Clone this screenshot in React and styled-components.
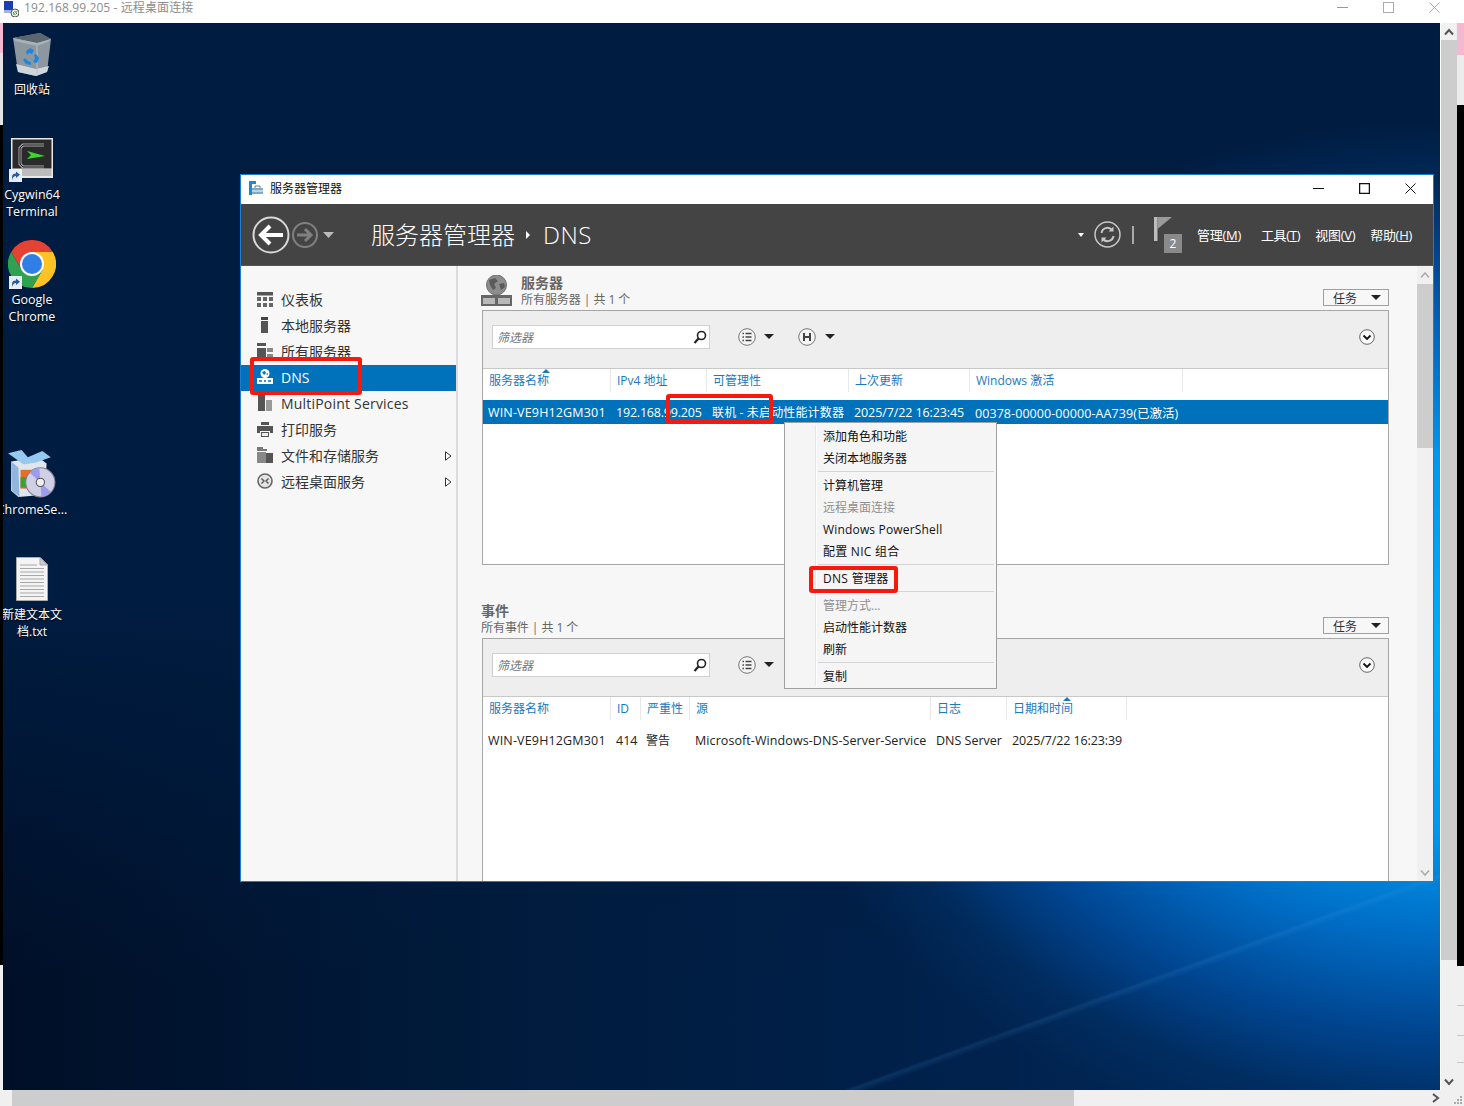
import React from 'react';
import styled, { createGlobalStyle } from 'styled-components';

const FONT = `"Open Sans","Noto Sans CJK SC",sans-serif`;

const Global = createGlobalStyle`
  html, body { margin: 0; padding: 0; background: #fff; }
  body { font-family: ${FONT}; }
  #root { width: 1464px; height: 1106px; overflow: hidden; }
  * { box-sizing: border-box; }
`;

const Page = styled.div`
  width: 1464px; height: 1106px; display: flex; flex-direction: column; background: #fff; overflow: hidden;
`;
const RdpTitle = styled.div`
  height: 23px; flex: none; display: flex; align-items: center; background: #fff; padding-left: 3px;
`;
const RdpText = styled.span`
  margin-left: 5px; font-size: 12px; color: #8c8c8c; flex: 1; white-space: nowrap; letter-spacing: .1px; margin-top: -9px;
`;
const RdpControls = styled.div`
  display: flex; align-items: center; gap: 35px; margin-top: -8px; margin-right: 24px;
`;
const MiddleRow = styled.div`
  height: 1067px; flex: none; display: flex;
`;
const EdgeStrip = styled.div`
  width: ${p => p.$w}px; flex: none; display: flex; flex-direction: column;
`;
const EdgePart = styled.div`
  height: ${p => p.$h}px; flex: none; background: ${p => p.$c}; border-bottom: ${p => p.$line ? '1px solid #c8c8c8' : 'none'};
`;
const Desktop = styled.div`
  width: 1437px; flex: none; position: relative; overflow: hidden;
  background:
    linear-gradient(160deg, transparent 86.3%, rgba(70,160,235,.14) 86.5%, transparent 86.9%),
    radial-gradient(ellipse 690px 525px at 1452px 620px, #00acf8 0%, #0096ec 36%, #006cc4 56%, #004590 74%, rgba(0,50,105,.6) 88%, transparent 100%),
    linear-gradient(180deg, #001c40 0%, #001c40 55%, rgba(0,28,64,0) 90%),
    linear-gradient(90deg, #000f27 0%, #001a3a 30%, #002049 60%, #012a5c 100%);
`;
const VScroll = styled.div`
  width: 17px; flex: none; background: #f0f0f0; border-left: 1px solid #fff; display: flex; flex-direction: column; align-items: stretch;
`;
const ScrollEnd = styled.div`
  height: ${p => p.$h}px; flex: none; display: flex; align-items: center; justify-content: center;
`;
const VThumb = styled.div`
  height: ${p => p.$h}px; flex: none; background: #cdcdcd;
`;
const Spring = styled.div`flex: 1;`;
const HScroll = styled.div`
  height: 16px; flex: none; display: flex; background: #f0f0f0; align-items: stretch;
`;
const HThumb = styled.div`
  width: 1062px; margin-left: 12px; background: #cdcdcd;
`;
const HArrow = styled.div`
  margin-left: auto; width: 32px; display: flex; align-items: center; justify-content: flex-start; position: relative;
`;
const Grip = styled.svg`
  position: absolute; right: 1px; bottom: 1px;
`;

/* Desktop icons */
const DeskIcon = styled.div`
  position: absolute; left: -10px; top: ${p => p.$top}px; width: 78px;
  display: flex; flex-direction: column; align-items: center;
`;
const DeskImage = styled.div`
  width: 48px; height: ${p => p.$h}px; position: relative; display: flex; justify-content: center;
`;
const DeskLabel = styled.div`
  font-size: ${p => p.$cjk ? 12 : 12.5}px; line-height: 17px; color: #fff; text-align: center; white-space: nowrap;
  margin-top: ${p => p.$gap}px; text-shadow: 0 1px 2px rgba(0,0,0,.8);
`;
const Shortcut = styled.svg`
  position: absolute; left: 1px; bottom: ${p => p.$b}px;
`;

/* Server manager window */
const Window = styled.div`
  position: absolute; left: 237px; top: 151px; width: 1194px; height: 708px;
  background: #fff; border: 1px solid #1a7fd4; display: flex; flex-direction: column; overflow: hidden;
`;
const WinTitle = styled.div`
  height: 29px; flex: none; display: flex; align-items: center; padding: 0 0 3px 8px; background: #fff;
`;
const WinTitleText = styled.span`
  font-size: 12px; color: #111; margin-left: 6px; flex: 1;
`;
const WinButtons = styled.div`
  display: flex; align-items: center; gap: 35px; margin-right: 17px;
`;
const Header = styled.div`
  height: 62px; flex: none; background: #444; display: flex; align-items: center; padding-left: 11px; border-bottom: 1px solid #555;
`;
const NavButtons = styled.div`
  display: flex; align-items: center; width: 119px; flex: none;
  & > svg:nth-child(2) { margin-left: 2px; }
`;
const Crumb = styled.span`
  font-size: 24px; font-weight: 300; color: #fff; white-space: nowrap; line-height: 30px; letter-spacing: ${p => p.$ls || 0}px;
`;
const CrumbArrow = styled.span`
  width: 0; height: 0; border-left: 4px solid #fff; border-top: 4px solid transparent; border-bottom: 4px solid transparent;
  margin: 0 13px 0 11px;
`;
const HeaderRight = styled.div`
  margin-left: auto; display: flex; align-items: center;
`;
const SmallDrop = styled.span`
  width: 0; height: 0; border-top: 4px solid #fff; border-left: 3.5px solid transparent; border-right: 3.5px solid transparent;
  margin-right: 10px;
`;
const HeaderDivider = styled.span`
  width: 2px; height: 18px; background: #aaa; margin: 0 20px 0 11px;
`;
const FlagWrap = styled.div`
  position: relative; width: 28px; height: 36px; margin-right: 15px;
`;
const Badge = styled.span`
  position: absolute; right: 0; bottom: 0; width: 18px; height: 19px; background: #8a8a8a; color: #fff;
  font-size: 12px; display: flex; align-items: center; justify-content: center;
`;
const Menu = styled.span`
  font-size: 13px; color: #fff; margin-right: ${p => p.$mr}px; white-space: nowrap; letter-spacing: -.3px;
`;
const Body = styled.div`
  flex: 1; display: flex; min-height: 0; background: #f7f7f7;
`;
const Sidebar = styled.nav`
  width: 217px; flex: none; padding-top: 21px; border-right: 2px solid #dcdcdc; display: flex; flex-direction: column;
`;
const NavItem = styled.div`
  height: 26px; flex: none; display: flex; align-items: center; padding: 0 0 2px 15px; position: relative;
  background: ${p => p.$active ? '#0072bc' : 'transparent'}; color: ${p => p.$active ? '#fff' : '#333'};
  font-size: 14px; white-space: nowrap; letter-spacing: ${p => p.$ls || 0}px;
`;
const NavIconBox = styled.span`
  width: 18px; height: 18px; flex: none; margin-right: 7px; display: flex; align-items: center; justify-content: center;
`;
const NavCaret = styled.svg`
  position: absolute; right: 4px; top: 8px;
`;
const Content = styled.main`
  width: 959px; flex: none; padding: 9px 28px 0 23px; overflow: hidden;
`;
const SectionHead = styled.div`
  height: 35px; display: flex; align-items: stretch;
`;
const HeadIcon = styled.div`
  width: 31px; margin-right: 9px; flex: none;
`;
const HeadText = styled.div`
  flex: 1; display: flex; flex-direction: column; justify-content: ${p => p.$end ? 'flex-end' : 'flex-start'};
`;
const SecTitle = styled.div`
  font-size: 14px; font-weight: 700; color: #666; line-height: 16px;
`;
const SecSub = styled.div`
  font-size: 12px; color: #666; line-height: 16px; padding-bottom: 2px; margin-top: ${p => p.$mt || 0}px; letter-spacing: -.05px;
`;
const TaskButton = styled.div`
  width: 66px; height: 17px; align-self: flex-end; margin-bottom: 4px; border: 1px solid #a0a0a0; background: #f7f7f7;
  font-size: 12px; color: #333; display: flex; align-items: center; padding-left: 9px; justify-content: space-between; padding-right: 7px;
`;
const DarkDrop = styled.span`
  width: 0; height: 0; border-top: 5px solid #222; border-left: 5px solid transparent; border-right: 5px solid transparent;
  margin-left: ${p => p.$ml || 0}px;
`;
const Panel = styled.section`
  margin-left: 1px; width: 907px; height: ${p => p.$h}px; border: 1px solid #a6a6a6; background: #fff; flex: none;
`;
const Toolbar = styled.div`
  height: 58px; background: #eee; border-bottom: 1px solid #c8c8c8; display: flex; align-items: center; padding: 0 13px 6px 9px;
`;
const FilterBox = styled.div`
  width: 218px; height: 24px; background: #fff; border: 1px solid #d0d0d0; display: flex; align-items: center;
  justify-content: space-between; padding: 0 1px 0 4px; font-size: 12px; font-style: italic; color: #777;
`;
const ToolGroup = styled.div`
  display: flex; align-items: center; margin-left: ${p => p.$ml}px;
`;
const ExpandCircle = styled.div`
  margin-left: auto; display: flex;
`;
const ColumnHead = styled.div`
  display: grid; grid-template-columns: ${p => p.$cols}; height: 31px; position: relative;
`;
const ColCell = styled.div`
  font-size: 12px; color: #1b78bd; padding: 3px 0 0 6px; height: 23px; line-height: 18px; white-space: nowrap;
  border-right: 1px solid #e8e8e8; position: relative;
`;
const SortMark = styled.span`
  position: absolute; top: 0; left: ${p => p.$l}px; width: 0; height: 0;
  border-bottom: 4px solid #1b78bd; border-left: 4px solid transparent; border-right: 4px solid transparent;
`;
const Row = styled.div`
  display: grid; grid-template-columns: ${p => p.$cols}; height: 24px; align-items: center;
  background: ${p => p.$sel ? '#0072bc' : 'transparent'}; color: ${p => p.$sel ? '#fff' : '#222'};
`;
const RowCell = styled.div`
  font-size: ${p => p.$cjk ? 12 : 12.5}px; padding-left: 5px; white-space: nowrap; letter-spacing: ${p => p.$ls || 0}px;
`;
const InnerScroll = styled.div`
  width: 16px; flex: none; background: #f0f0f0; display: flex; flex-direction: column;
`;
const SectionGap = styled.div`height: 38px;`;

/* Context menu + callouts */
const ContextMenu = styled.div`
  position: absolute; left: 781px; top: 399px; width: 213px; height: 267px; background: #f5f5f5; border: 1px solid #a0a0a0;
  padding: 2px; z-index: 5;
`;
const MenuGutter = styled.span`
  position: absolute; left: 30px; top: 2px; bottom: 2px; width: 2px; background: linear-gradient(90deg,#e6e6e6 50%,#fff 50%);
`;
const MenuRow = styled.div`
  height: 22px; display: flex; align-items: center; padding-left: 36px; font-size: 12px; position: relative;
  color: ${p => p.$off ? '#8f8f8f' : '#111'}; white-space: nowrap; letter-spacing: ${p => p.$ls || 0}px;
`;
const MenuSep = styled.div`
  height: 5px; margin-left: 31px; display: flex; align-items: center;
  &::after { content: ''; display: block; width: 100%; height: 1px; background: #d4d4d4; }
`;
const Callout = styled.div`
  position: absolute; left: ${p => p.$x}px; top: ${p => p.$y}px; width: ${p => p.$w}px; height: ${p => p.$h}px;
  border: 4px solid #f8180c; border-radius: 3px; z-index: 6; pointer-events: none;
`;

/* Drawings */
const RdpIcon = () => (
  <svg width="16" height="16" viewBox="0 0 16 16" style={{ marginTop: -6 }}>
    <rect x="1" y="0" width="9" height="9" fill="#1a3fb0" />
    <rect x="1" y="9" width="11" height="3" fill="#9fb4d8" />
    <circle cx="12" cy="12" r="4" fill="#e8f2e4" stroke="#555" />
    <path d="M10 12l1.5-1.5M14 12l-1.5 1.5M10 13h2M12 11h2" stroke="#1d8f2f" fill="none" />
  </svg>
);
const Line = ({ c = '#999', w = 1 }) => (
  <svg width="11" height="11" viewBox="0 0 11 11"><path d="M0 5.5h11" stroke={c} strokeWidth={w} /></svg>
);
const Square = ({ c = '#999', w = 1, s = 11 }) => (
  <svg width={s} height={s} viewBox={`0 0 ${s} ${s}`}><rect x=".5" y=".5" width={s - 1} height={s - 1} fill="none" stroke={c} strokeWidth={w} /></svg>
);
const Cross = ({ c = '#999', s = 11 }) => (
  <svg width={s} height={s} viewBox={`0 0 ${s} ${s}`}><path d={`M.5 .5L${s - .5} ${s - .5}M${s - .5} .5L.5 ${s - .5}`} stroke={c} fill="none" /></svg>
);
const Chevron = ({ dir = 'up', c = '#555', w = 2 }) => (
  <svg width="10" height="8" viewBox="0 0 10 8">
    <path d={dir === 'up' ? 'M1 6.5L5 2l4 4.5' : 'M1 1.5L5 6l4-4.5'} fill="none" stroke={c} strokeWidth={w} />
  </svg>
);
const ShortcutBadge = ({ b }) => (
  <Shortcut $b={b} width="13" height="13" viewBox="0 0 13 13">
    <rect width="13" height="13" fill="#e8eef5" />
    <path d="M3 11V8c0-2.5 1.5-3.6 4-3.6V2.4l4 3.3-4 3.3V7C5 7 4.200 8 3 11z" fill="#2a5a9f" />
  </Shortcut>
);
const RecycleBin = () => (
  <svg width="40" height="44" viewBox="0 0 40 44">
    <path d="M1 6L28 1l11 6-4 33-11 4-18-4z" fill="#8d979f" />
    <path d="M1 6L28 1l11 6-14 4z" fill="#5c666e" />
    <path d="M1 6l24 5 14-4-3 3-11 4L3 9z" fill="#a9b2b9" />
    <path d="M4 32l20 5 13-3-2 6-11 4-18-4z" fill="#cfd6db" />
    <path d="M25 14v30" stroke="#b9c1c7" />
    <path d="M14 19l4-3 4 2-2 4-3-1-2 2zM24 22l3 4-2 5-4-1 2-4-1-3zM13 26l3 3 3 1v3l-5-1-3-4z" fill="#1e86e0" />
  </svg>
);
const CygwinIcon = () => (
  <svg width="42" height="40" viewBox="0 0 42 40">
    <rect width="42" height="40" fill="#e8e8e8" />
    <rect x="1.500" y="1.500" width="39" height="29" fill="#2a2a2a" />
    <rect x="1.500" y="31" width="39" height="7" fill="#bcbcbc" />
    <path d="M33 7H12l-3 3v16l3 3h21" fill="none" stroke="#aaa" strokeWidth="3" />
    <path d="M33 7H12l-3 3v16l3 3h21" fill="none" stroke="#111" strokeWidth="1" />
    <path d="M16 13l18 5-18 3 4-4z" fill="#39d82a" />
  </svg>
);
const ChromeIcon = () => (
  <svg width="48" height="48" viewBox="-24 -24 48 48">
    <path d="M20.8-12A24 24 0 0 0-20.8-12L-10.400 6 0-12z" fill="#e34234" />
    <path d="M20.8-12A24 24 0 0 1 0 24L10.400 6 0-12z" fill="#fcc226" />
    <path d="M0 24A24 24 0 0 1-20.8-12L-10.400 6 10.400 6z" fill="#2fa24f" />
    <circle r="12" fill="#fff" />
    <circle r="10" fill="#2f7fe6" />
  </svg>
);
const SetupIcon = () => (
  <svg width="48" height="48" viewBox="3 2 46 46">
    <path d="M6 13L32 9l8 6-2 30-25 2-7-6z" fill="#dfe6ee" />
    <path d="M6 13l7 6 1 28-7-6z" fill="#93b4dd" />
    <path d="M3 5l13-3 6 7 14-6 8 6-14 5-12 2z" fill="#96c9f0" />
    <rect x="15" y="21" width="12" height="18" fill="#e46d28" />
    <rect x="15" y="28" width="12" height="10" fill="#3aa13a" />
    <circle cx="34" cy="33" r="14" fill="#cfcfe6" stroke="#80808f" />
    <path d="M34 33L24 24a14 14 0 0 1 9-5zM34 33l10 9a14 14 0 0 1-9 5z" fill="#9c9cec" />
    <circle cx="34" cy="33" r="4" fill="#eee" stroke="#555" />
  </svg>
);
const DocIcon = () => (
  <svg width="32" height="44" viewBox="0 0 32 44">
    <path d="M.5.500H24L31.500 8v35.500H.500z" fill="#f4f4f4" stroke="#aaa" />
    <path d="M24 .5V8h7.500z" fill="#ccc" stroke="#aaa" />
    <path d="M4 8h17M4 11.500h24M4 15h24M4 18.500h24M4 22h24M4 25.500h24M4 29h24M4 32.500h24M4 36h24M4 39.500h24" stroke="#a8a8a8" />
  </svg>
);
const SmIcon = () => (
  <svg width="15" height="14" viewBox="0 0 15 14">
    <rect x="0" y="0" width="3" height="14" fill="#1a8ad4" />
    <rect x="3" y="0" width="4" height="3" fill="#1a8ad4" />
    <path d="M3 7h11v6H3z" fill="#7fa9c8" />
    <path d="M6 7V5h5v2" fill="none" stroke="#777" />
    <path d="M3 10h11" stroke="#fff" />
  </svg>
);
const BackIcon = () => (
  <svg width="38" height="38" viewBox="0 0 38 38">
    <circle cx="19" cy="19" r="17.500" fill="none" stroke="#d8d8d8" strokeWidth="2" />
    <path d="M31 19H10M18 10l-9 9 9 9" fill="none" stroke="#fff" strokeWidth="4" />
  </svg>
);
const ForwardIcon = () => (
  <svg width="26" height="26" viewBox="0 0 26 26">
    <circle cx="13" cy="13" r="12" fill="none" stroke="#808080" strokeWidth="2" />
    <path d="M5 13h14M13 7l6 6-6 6" fill="none" stroke="#808080" strokeWidth="3" />
  </svg>
);
const RefreshIcon = () => (
  <svg width="27" height="27" viewBox="0 0 27 27">
    <circle cx="13.500" cy="13.500" r="12.500" fill="none" stroke="#c8c8c8" strokeWidth="1.500" />
    <path d="M7.500 12a6 6 0 0 1 10.500-3M19.500 15a6 6 0 0 1-10.500 3" fill="none" stroke="#c8c8c8" strokeWidth="2" />
    <path d="M19.500 5.500v5h-5zM7.500 21.500v-5h5z" fill="#c8c8c8" />
  </svg>
);
const FlagIcon = () => (
  <svg width="18" height="24" viewBox="0 0 18 24" style={{ position: 'absolute', left: 0, top: 0 }}>
    <rect x="0" y="0" width="3.500" height="24" fill="#bdbdbd" />
    <path d="M3.500 0H18L3.500 12z" fill="#9a9a9a" />
  </svg>
);
const SearchIcon = () => (
  <svg width="16" height="16" viewBox="0 0 16 16">
    <circle cx="9.500" cy="6.500" r="4" fill="none" stroke="#222" strokeWidth="1.600" />
    <path d="M6.500 9.500L2.500 14" stroke="#222" strokeWidth="2.200" />
  </svg>
);
const ListCircle = () => (
  <svg width="18" height="18" viewBox="0 0 18 18">
    <circle cx="9" cy="9" r="8.300" fill="#f4f4f4" stroke="#777" />
    <path d="M7.500 5.500h6M7.500 9h6M7.500 12.500h6M4.500 5.500h1.500M4.500 9h1.500M4.500 12.500h1.500" stroke="#444" strokeWidth="1.700" />
  </svg>
);
const SaveCircle = () => (
  <svg width="18" height="18" viewBox="0 0 18 18">
    <circle cx="9" cy="9" r="8.300" fill="#f4f4f4" stroke="#777" />
    <path d="M5 5h8v8H5z" fill="#444" />
    <path d="M7 5h4v3H7zM7 10h4v3H7z" fill="#f4f4f4" />
  </svg>
);
const ExpandIcon = () => (
  <svg width="16" height="16" viewBox="0 0 16 16">
    <circle cx="8" cy="8" r="7.300" fill="#fafafa" stroke="#666" />
    <path d="M4.500 6.500L8 10l3.500-3.500" fill="none" stroke="#111" strokeWidth="1.800" />
  </svg>
);
const ServerGlobe = () => (
  <svg width="31" height="31" viewBox="0 0 31 31">
    <circle cx="15.500" cy="10" r="10" fill="#8c8c8c" stroke="#6e6e6e" />
    <path d="M8 5l6-2 3 3-4 3 2 4-3 2-3-5zM18 9l5-1 1 4-4 3z" fill="#5a5a5a" />
    <rect x="0" y="20" width="31" height="11" fill="#666" />
    <rect x="2" y="23" width="12" height="6" fill="#b8b8b8" />
    <rect x="17" y="23" width="12" height="6" fill="#b8b8b8" />
  </svg>
);
const NavGlyph = ({ kind }) => {
  const g = '#666';
  switch (kind) {
    case 'dash': return (
      <svg width="16" height="15" viewBox="0 0 16 15">
        <rect width="16" height="3.500" fill="#555" />
        <path d="M0 5h4v4H0zM6 5h4v4H6zM12 5h4v4h-4zM0 11h4v4H0zM6 11h4v4H6zM12 11h4v4h-4z" fill={g} />
      </svg>
    );
    case 'local': return (
      <svg width="16" height="16" viewBox="0 0 16 16"><path d="M4 0h7v3H4z" fill="#444" /><path d="M4 4h7v12H4z" fill="#555" /></svg>
    );
    case 'all': return (
      <svg width="16" height="16" viewBox="0 0 16 16"><path d="M0 0h9v3H0zM0 5h9v11H0z" fill="#555" /><path d="M10 5h6v4h-6zM10 11h6v5h-6z" fill="#888" /></svg>
    );
    case 'dns': return (
      <svg width="16" height="16" viewBox="0 0 16 16">
        <circle cx="8" cy="4.500" r="4.500" fill="#fff" /><path d="M5 3l3-1 1 2-2 2zM9 5l2-1v2z" fill="#0072bc" />
        <path d="M0 9h16v6H0z" fill="#fff" /><path d="M2 12h3M7 12h2M11 12h3" stroke="#0072bc" strokeWidth="1.500" />
      </svg>
    );
    case 'multi': return (
      <svg width="16" height="16" viewBox="0 0 16 16"><path d="M1 0h7v16H1z" fill="#555" /><path d="M9 5h6v11H9z" fill="#999" /></svg>
    );
    case 'print': return (
      <svg width="16" height="15" viewBox="0 0 16 15"><path d="M4 0h8v3H4zM0 4h16v7h-3V9H3v2H0z" fill="#555" /><path d="M4 10h8v5H4z" fill="#555" /><path d="M5 11h6v3H5z" fill="#eee" /></svg>
    );
    case 'file': return (
      <svg width="16" height="16" viewBox="0 0 16 16"><path d="M0 0h6v2h4v2H0z" fill="#777" /><path d="M0 5h9v11H0z" fill="#888" /><path d="M9 6h7v10H9z" fill="#555" /></svg>
    );
    default: return (
      <svg width="16" height="16" viewBox="0 0 16 16"><circle cx="8" cy="8" r="7" fill="#e4e4e4" stroke="#666" strokeWidth="1.600" /><path d="M4.500 5.500L7 8 4.500 10.500M11.500 5.500L9 8l2.500 2.500" fill="none" stroke="#555" strokeWidth="1.400" /></svg>
    );
  }
};
const Caret = () => (
  <NavCaret width="7" height="10" viewBox="0 0 7 10"><path d="M.5.800L6 5 .5 9.200z" fill="#fff" stroke="#333" /></NavCaret>
);

const navItems = [
  ['dash', '仪表板'], ['local', '本地服务器'], ['all', '所有服务器'], ['dns', 'DNS', 'active'],
  ['multi', 'MultiPoint Services'], ['print', '打印服务'], ['file', '文件和存储服务', 'caret'], ['remote', '远程桌面服务', 'caret'],
];
const serverCols = '128px 96px 142px 121px 213px';
const eventCols = '128px 30px 49px 241px 76px 120px';
const menuGroups = [
  [['添加角色和功能'], ['关闭本地服务器']],
  [['计算机管理'], ['远程桌面连接', true], ['Windows PowerShell', false, .17], ['配置 NIC 组合', false, .25]],
  [['DNS 管理器', false, .3]],
  [['管理方式...', true], ['启动性能计数器'], ['刷新']],
  [['复制']],
];

export default function App() {
  return (
    <Page>
      <Global />
      <RdpTitle>
        <RdpIcon />
        <RdpText>192.168.99.205 - 远程桌面连接</RdpText>
        <RdpControls><Line /><Square c="#aaa" /><Cross c="#aaa" /></RdpControls>
      </RdpTitle>
      <MiddleRow>
        <EdgeStrip $w={3}>
          <EdgePart $h={30} $c="#f5b8d0" /><EdgePart $h={72} $c="#e4e4e4" /><EdgePart $h={840} $c="#000" />
          <EdgePart $h={125} $c="#f0f0f0" />
        </EdgeStrip>
        <Desktop>
          <DeskIcon $top={9}><DeskImage $h={44}><RecycleBin /></DeskImage><DeskLabel $cjk $gap={5}>回收站</DeskLabel></DeskIcon>
          <DeskIcon $top={115}><DeskImage $h={40}><CygwinIcon /><ShortcutBadge b={-4} /></DeskImage><DeskLabel $gap={8}>Cygwin64<br />Terminal</DeskLabel></DeskIcon>
          <DeskIcon $top={217}><DeskImage $h={48}><ChromeIcon /><ShortcutBadge b={-1} /></DeskImage><DeskLabel $gap={3}>Google<br />Chrome</DeskLabel></DeskIcon>
          <DeskIcon $top={427}><DeskImage $h={48}><SetupIcon /></DeskImage><DeskLabel $gap={3}>ChromeSe...</DeskLabel></DeskIcon>
          <DeskIcon $top={534}><DeskImage $h={44}><DocIcon /></DeskImage><DeskLabel $cjk $gap={5}>新建文本文<br />档.txt</DeskLabel></DeskIcon>

          <Window>
            <WinTitle>
              <SmIcon />
              <WinTitleText>服务器管理器</WinTitleText>
              <WinButtons>
                <Line c="#111" /><Square c="#111" w={1.500} /><Cross c="#111" />
              </WinButtons>
            </WinTitle>
            <Header>
              <NavButtons>
                <BackIcon />
                <ForwardIcon />
                <svg width="11" height="6" viewBox="0 0 11 6" style={{ marginLeft: 5 }}><path d="M0 0h11L5.500 6z" fill="#bbb" /></svg>
              </NavButtons>
              <Crumb>服务器管理器</Crumb>
              <CrumbArrow />
              <Crumb $ls={.5}>DNS</Crumb>
              <HeaderRight>
                <SmallDrop />
                <RefreshIcon />
                <HeaderDivider />
                <FlagWrap><FlagIcon /><Badge>2</Badge></FlagWrap>
                <Menu $mr={20}>管理(<u>M</u>)</Menu>
                <Menu $mr={15}>工具(<u>T</u>)</Menu>
                <Menu $mr={15}>视图(<u>V</u>)</Menu>
                <Menu $mr={21}>帮助(<u>H</u>)</Menu>
              </HeaderRight>
            </Header>
            <Body>
              <Sidebar>
                {navItems.map(([kind, label, flag]) => (
                  <NavItem key={label} $active={flag === 'active'} $ls={kind === 'multi' ? .2 : 0}>
                    <NavIconBox><NavGlyph kind={kind} /></NavIconBox>
                    {label}
                    {flag === 'caret' && <Caret />}
                  </NavItem>
                ))}
              </Sidebar>
              <Content>
                <SectionHead>
                  <HeadIcon><ServerGlobe /></HeadIcon>
                  <HeadText>
                    <SecTitle>服务器</SecTitle>
                    <SecSub $mt={1}>所有服务器 | 共 1 个</SecSub>
                  </HeadText>
                  <TaskButton>任务<DarkDrop /></TaskButton>
                </SectionHead>
                <Panel $h={255}>
                  <Toolbar>
                    <FilterBox>筛选器<SearchIcon /></FilterBox>
                    <ToolGroup $ml={28}><ListCircle /><DarkDrop $ml={8} /></ToolGroup>
                    <ToolGroup $ml={24}><SaveCircle /><DarkDrop $ml={9} /></ToolGroup>
                    <ExpandCircle><ExpandIcon /></ExpandCircle>
                  </Toolbar>
                  <ColumnHead $cols={serverCols}>
                    <ColCell>服务器名称<SortMark $l={59} /></ColCell>
                    <ColCell>IPv4 地址</ColCell>
                    <ColCell>可管理性</ColCell>
                    <ColCell>上次更新</ColCell>
                    <ColCell>Windows 激活</ColCell>
                  </ColumnHead>
                  <Row $cols={serverCols} $sel>
                    <RowCell $ls={.16}>WIN-VE9H12GM301</RowCell>
                    <RowCell $ls={-.2}>192.168.99.205</RowCell>
                    <RowCell $cjk $ls={.15}>联机 - 未启动性能计数器</RowCell>
                    <RowCell $ls={-.1}>2025/7/22 16:23:45</RowCell>
                    <RowCell $ls={.07}>00378-00000-00000-AA739(已激活)</RowCell>
                  </Row>
                </Panel>
                <SectionGap />
                <SectionHead>
                  <HeadText $end>
                    <SecTitle>事件</SecTitle>
                    <SecSub $mt={1}>所有事件 | 共 1 个</SecSub>
                  </HeadText>
                  <TaskButton>任务<DarkDrop /></TaskButton>
                </SectionHead>
                <Panel $h={300}>
                  <Toolbar>
                    <FilterBox>筛选器<SearchIcon /></FilterBox>
                    <ToolGroup $ml={28}><ListCircle /><DarkDrop $ml={8} /></ToolGroup>
                    <ExpandCircle><ExpandIcon /></ExpandCircle>
                  </Toolbar>
                  <ColumnHead $cols={eventCols}>
                    <ColCell>服务器名称</ColCell>
                    <ColCell>ID</ColCell>
                    <ColCell>严重性</ColCell>
                    <ColCell>源</ColCell>
                    <ColCell>日志</ColCell>
                    <ColCell>日期和时间<SortMark $l={56} /></ColCell>
                  </ColumnHead>
                  <Row $cols={eventCols}>
                    <RowCell $ls={.16}>WIN-VE9H12GM301</RowCell>
                    <RowCell>414</RowCell>
                    <RowCell $cjk>警告</RowCell>
                    <RowCell $ls={.08}>Microsoft-Windows-DNS-Server-Service</RowCell>
                    <RowCell>DNS Server</RowCell>
                    <RowCell $ls={-.1}>2025/7/22 16:23:39</RowCell>
                  </Row>
                </Panel>
              </Content>
              <InnerScroll>
                <ScrollEnd $h={18}><Chevron dir="up" c="#aaa" w={1.500} /></ScrollEnd>
                <VThumb $h={164} />
                <Spring />
                <ScrollEnd $h={16}><Chevron dir="down" c="#aaa" w={1.500} /></ScrollEnd>
              </InnerScroll>
            </Body>
          </Window>

          <ContextMenu>
            <MenuGutter />
            {menuGroups.map((group, i) => (
              <React.Fragment key={i}>
                {i > 0 && <MenuSep />}
                {group.map(([label, off, ls]) => <MenuRow key={label} $off={off} $ls={ls}>{label}</MenuRow>)}
              </React.Fragment>
            ))}
          </ContextMenu>
          <Callout $x={247} $y={334} $w={112} $h={38} />
          <Callout $x={663} $y={371} $w={107} $h={30} />
          <Callout $x={806} $y={543} $w={89} $h={27} />
        </Desktop>
        <VScroll>
          <ScrollEnd $h={17}><Chevron dir="up" /></ScrollEnd>
          <VThumb $h={920} />
          <Spring />
          <ScrollEnd $h={17}><Chevron dir="down" /></ScrollEnd>
        </VScroll>
        <EdgeStrip $w={7}>
          <EdgePart $h={32} $c="#f5b8d0" /><EdgePart $h={50} $c="#ececec" /><EdgePart $h={861} $c="#000" />
          <EdgePart $h={40} $c="#f0f0f0" $line /><EdgePart $h={30} $c="#f0f0f0" $line /><EdgePart $h={27} $c="#f0f0f0" $line /><EdgePart $h={27} $c="#f0f0f0" />
        </EdgeStrip>
      </MiddleRow>
      <HScroll>
        <HThumb />
        <HArrow>
          <svg width="8" height="10" viewBox="0 0 8 10"><path d="M1 1l5 4-5 4" fill="none" stroke="#555" strokeWidth="2" /></svg>
          <Grip width="10" height="10" viewBox="0 0 10 10"><path d="M7 1h2v2H7zM4 4h2v2H4zM7 4h2v2H7zM1 7h2v2H1zM4 7h2v2H4zM7 7h2v2H7z" fill="#aaa" /></Grip>
        </HArrow>
      </HScroll>
    </Page>
  );
}
